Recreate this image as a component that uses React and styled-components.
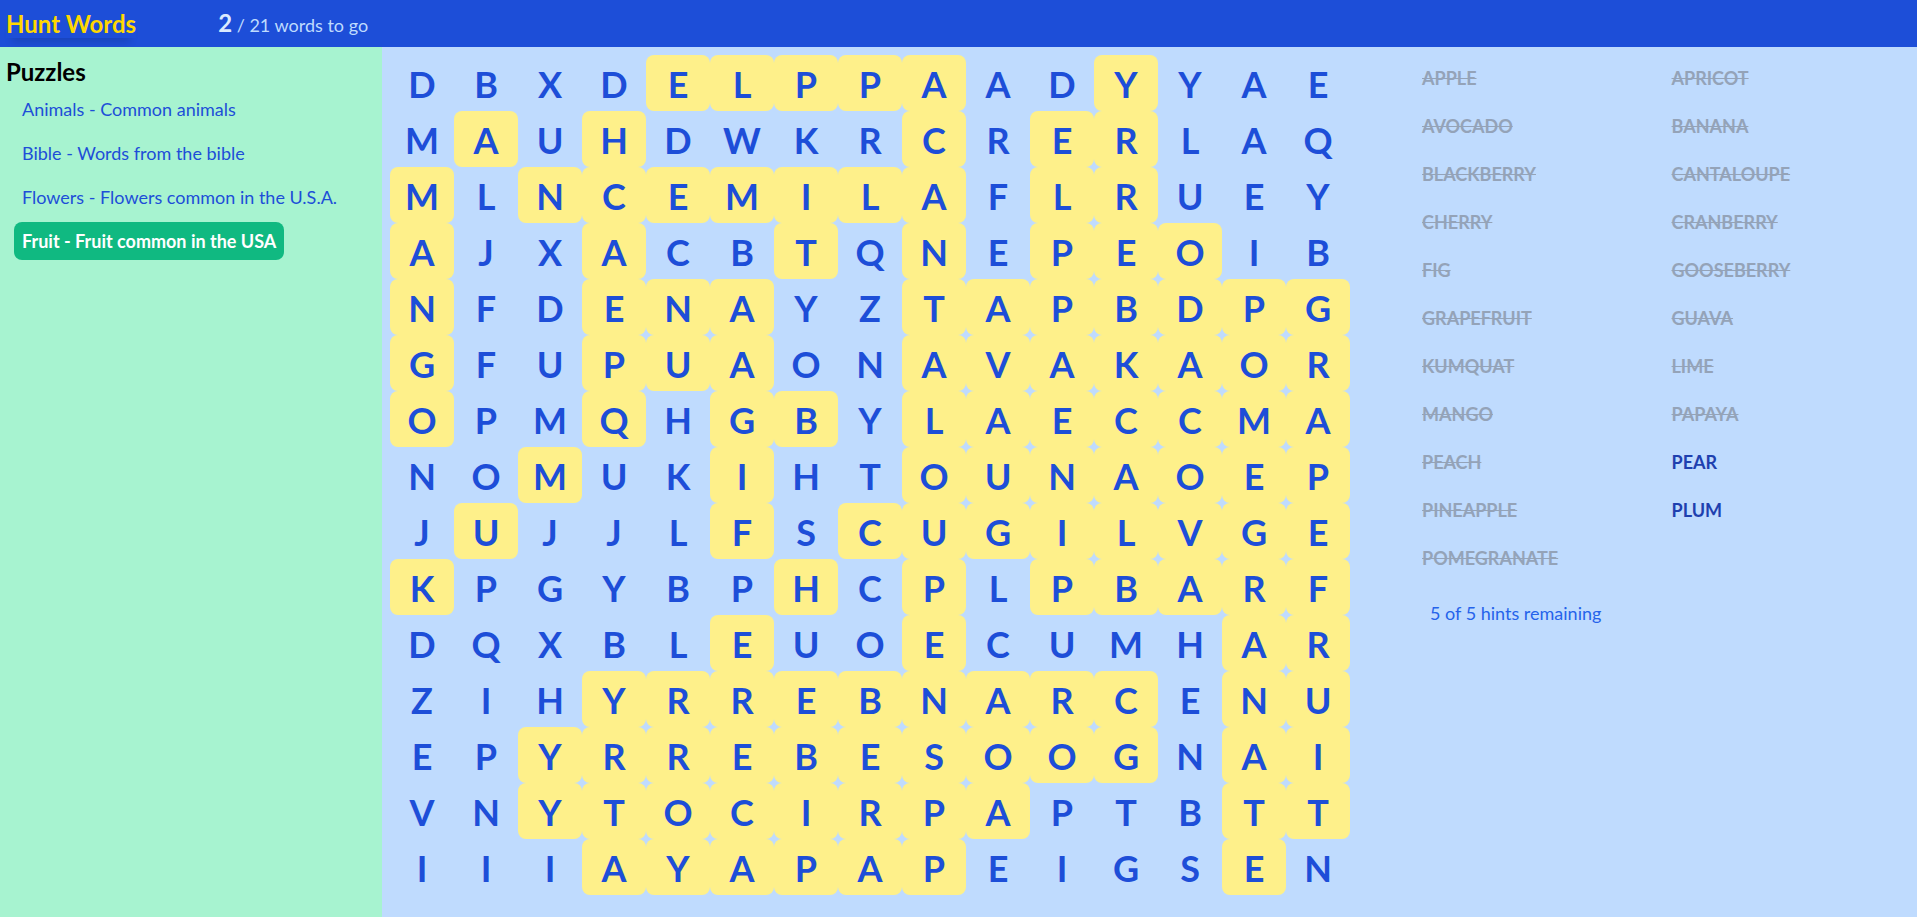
import React from "react";
import styled, { createGlobalStyle } from "styled-components";

const GlobalStyle = createGlobalStyle`
  *, *::before, *::after { box-sizing: border-box; }
  body {
    margin: 0;
    background: #bfdbfe;
    font-family: Lato, "Noto Sans", sans-serif;
    font-size: 18px;
    line-height: 28px;
  }
  h1, h2, p, ul { margin: 0; padding: 0; }
  ul { list-style: none; }
  button { font: inherit; color: inherit; border: 0; background: none; cursor: pointer; }
`;

const Page = styled.div`
  min-height: 100vh;
  display: flex;
  flex-direction: column;
`;

const Header = styled.header`
  display: flex;
  align-items: center;
  gap: 82px;
  height: 47px;
  padding: 0 6px;
  background: #1d4ed8;
  color: #bfdbfe;
`;

const Title = styled.h1`
  font-size: 24px;
  line-height: 28px;
  font-weight: 700;
  color: #ffd700;
  box-shadow: 0 10px 8px -6px rgba(0, 0, 0, 0.14);
`;

const Progress = styled.p`
  strong {
    font-size: 24px;
    font-weight: 700;
    color: #dbeafe;
  }
`;

const Body = styled.div`
  flex: 1;
  display: flex;
`;

const Sidebar = styled.nav`
  flex: 0 0 382px;
  padding: 9px 6px 8px;
  background: #a7f3d0;
`;

const SidebarTitle = styled.h2`
  font-size: 24px;
  line-height: 32px;
  font-weight: 700;
  color: #000;
`;

const PuzzleItem = styled.li`
  padding: 2px 8px 4px;
`;

const PuzzleButton = styled.button`
  padding: 5px 8px;
  border-radius: 8px;
  white-space: nowrap;
  text-align: left;
  color: ${(p) => (p.$selected ? "#fff" : "#1d4ed8")};
  background: ${(p) => (p.$selected ? "#10b981" : "transparent")};
  font-weight: ${(p) => (p.$selected ? 700 : 400)};
`;

const Board = styled.main`
  flex: 0 0 auto;
  padding: 8px;
`;

const Letters = styled.div`
  display: grid;
  grid-template-columns: repeat(15, 64px);
`;

const Letter = styled.button`
  padding: 9px 0 7px;
  border-radius: 8px;
  text-align: center;
  && {
    font-size: 36px;
    line-height: 40px;
    font-weight: 700;
    color: #1d4ed8;
    background: ${(p) => (p.$found ? "#fef08a" : "transparent")};
  }
`;

const WordPanel = styled.aside`
  flex: 1;
  padding: 8px 0 8px 64px;
`;

const WordList = styled.ul`
  display: grid;
  grid-template-columns: 1fr 1fr;
  column-gap: 4px;
`;

const Word = styled.li`
  height: 48px;
  padding: 9px 0 7px;
  font-weight: 700;
  color: ${(p) => (p.$found ? "#94a3b8" : "#1e40af")};
  text-decoration: ${(p) => (p.$found ? "line-through" : "none")};
`;

const HintButton = styled.button`
  margin-top: 8px;
  padding: 8px;
  color: #2563eb;
`;

const puzzles = [
  "Animals - Common animals",
  "Bible - Words from the bible",
  "Flowers - Flowers common in the U.S.A.",
  "Fruit - Fruit common in the USA",
];

// Uppercase letters belong to words that have been found.
const rows = [
  "dbxdELPPAadYyae",
  "mAuHdwkrCrERlaq",
  "MlNCEMILAfLRuey",
  "AjxAcbTqNePEOib",
  "NfdENAyzTAPBDPG",
  "GfuPUAonAVAKAOR",
  "OpmQhGByLAECCMA",
  "noMukIhtOUNAOEP",
  "jUjjlFsCUGILVGE",
  "KpgybpHcPlPBARF",
  "dqxblEuoEcumhAR",
  "zihYRREBNARCeNU",
  "epYRREBESOOGnAI",
  "vnYTOCIRPAptbTT",
  "iiiAYAPAPeigsEn",
];

const words = [
  "APPLE", "APRICOT", "AVOCADO", "BANANA", "BLACKBERRY", "CANTALOUPE",
  "CHERRY", "CRANBERRY", "FIG", "GOOSEBERRY", "GRAPEFRUIT", "GUAVA",
  "KUMQUAT", "LIME", "MANGO", "PAPAYA", "PEACH", "PEAR",
  "PINEAPPLE", "PLUM", "POMEGRANATE",
];
const remaining = ["PEAR", "PLUM"];

export default function App() {
  return (
    <Page>
      <GlobalStyle />
      <Header>
        <Title>Hunt Words</Title>
        <Progress>
          <strong>{remaining.length}</strong> / {words.length} words to go
        </Progress>
      </Header>
      <Body>
        <Sidebar>
          <SidebarTitle>Puzzles</SidebarTitle>
          <ul>
            {puzzles.map((name, i) => (
              <PuzzleItem key={name}>
                <PuzzleButton type="button" $selected={i === 3}>{name}</PuzzleButton>
              </PuzzleItem>
            ))}
          </ul>
        </Sidebar>
        <Board>
          <Letters>
            {rows.flatMap((row, r) =>
              [...row].map((ch, c) => (
                <Letter key={`${r}-${c}`} type="button" $found={ch !== ch.toLowerCase()}>
                  {ch.toUpperCase()}
                </Letter>
              ))
            )}
          </Letters>
        </Board>
        <WordPanel>
          <WordList>
            {words.map((word) => (
              <Word key={word} $found={!remaining.includes(word)}>{word}</Word>
            ))}
          </WordList>
          <HintButton type="button">5 of 5 hints remaining</HintButton>
        </WordPanel>
      </Body>
    </Page>
  );
}
